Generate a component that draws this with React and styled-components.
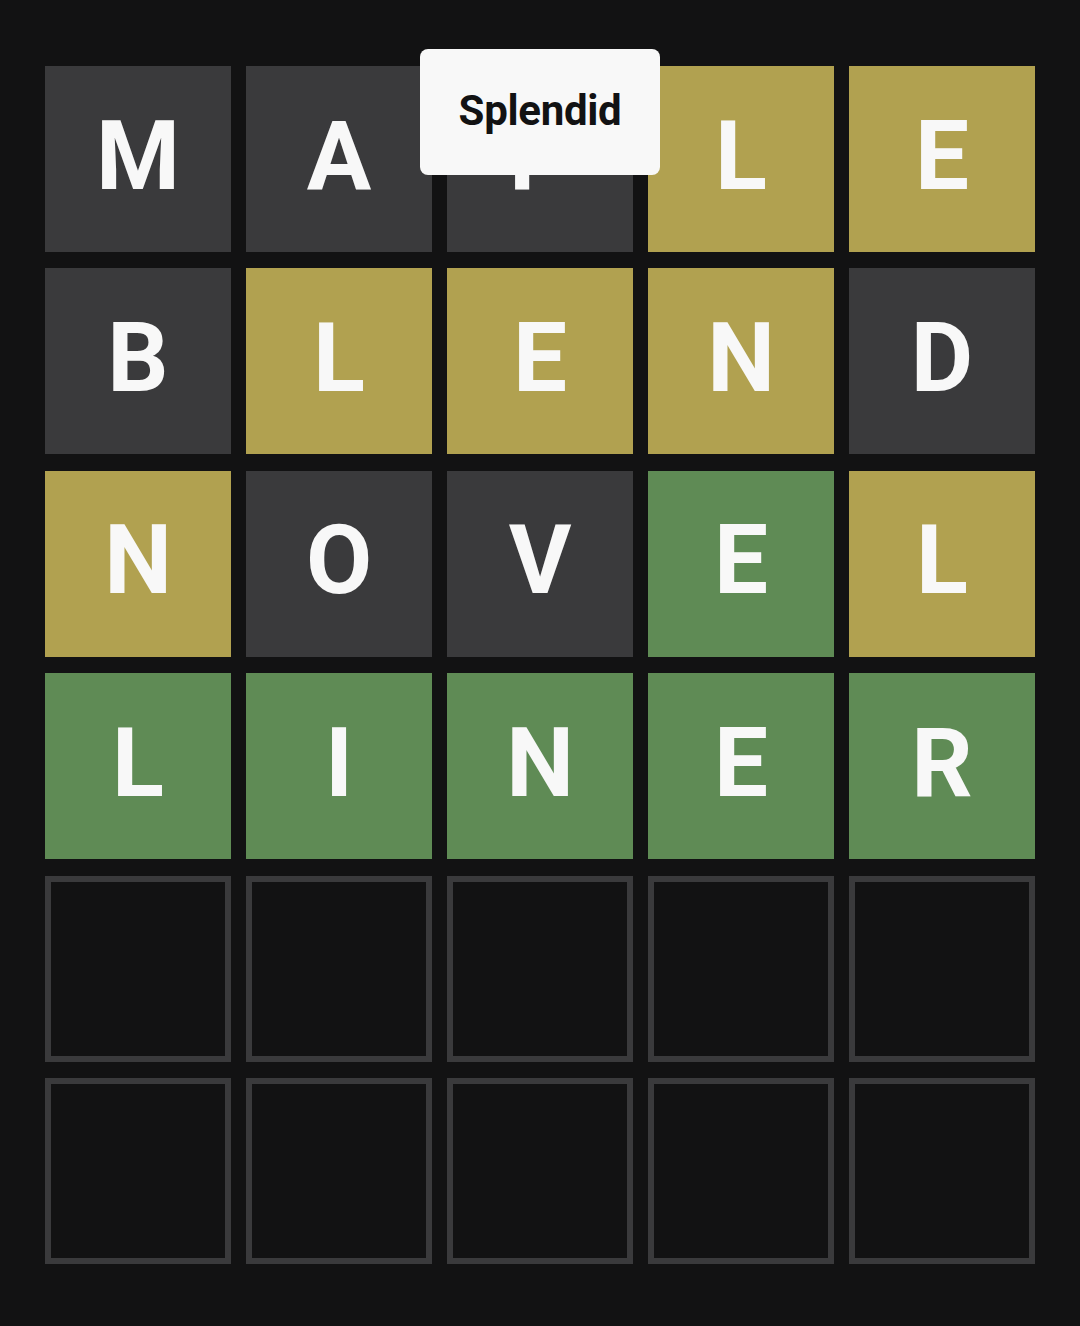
import React from "react";
import styled, { createGlobalStyle } from "styled-components";

const GlobalStyle = createGlobalStyle`
  html, body {
    margin: 0;
    padding: 0;
    background: #121213;
  }
  body {
    font-family: "Liberation Sans", Arial, sans-serif;
  }
`;

const Page = styled.div`
  position: relative;
  width: 1080px;
  height: 1326px;
  box-sizing: border-box;
  padding-top: 66px;
  display: flex;
  justify-content: center;
  background: #121213;
`;

const Board = styled.div`
  display: grid;
  grid-template-columns: repeat(5, 186px);
  grid-template-rows: repeat(6, 186px);
  column-gap: 15px;
  row-gap: 16.4px;
  height: fit-content;
`;

const COLORS = {
  absent: "#3a3a3c",
  present: "#b1a150",
  correct: "#5f8b55",
};

const Tile = styled.div`
  box-sizing: border-box;
  width: 186px;
  height: 186px;
  display: flex;
  align-items: center;
  justify-content: center;
  padding-bottom: 7px;
  background: ${(p) => (p.$state ? COLORS[p.$state] : "transparent")};
  border: ${(p) => (p.$state ? "none" : "6px solid #3a3a3c")};
  color: #f8f8f8;
  font-family: Roboto, "Liberation Sans", Arial, sans-serif;
  font-weight: 700;
  font-size: 96px;
  line-height: 1;
`;

const Toast = styled.div`
  position: absolute;
  top: 49px;
  left: 50%;
  transform: translateX(-50%);
  width: 240px;
  height: 126px;
  box-sizing: border-box;
  background: #f8f8f8;
  border-radius: 8px;
  display: flex;
  align-items: center;
  justify-content: center;
  padding-bottom: 4px;
  color: #121213;
  font-family: Roboto, "Liberation Sans", sans-serif;
  font-weight: 700;
  font-size: 42px;
  letter-spacing: -0.3px;
`;

const rows = [
  [["M", "absent"], ["A", "absent"], ["P", "absent"], ["L", "present"], ["E", "present"]],
  [["B", "absent"], ["L", "present"], ["E", "present"], ["N", "present"], ["D", "absent"]],
  [["N", "present"], ["O", "absent"], ["V", "absent"], ["E", "correct"], ["L", "present"]],
  [["L", "correct"], ["I", "correct"], ["N", "correct"], ["E", "correct"], ["R", "correct"]],
  [["", null], ["", null], ["", null], ["", null], ["", null]],
  [["", null], ["", null], ["", null], ["", null], ["", null]],
];

export default function App() {
  return (
    <>
      <GlobalStyle />
      <Page>
        <Board>
          {rows.flatMap((row, r) =>
            row.map(([letter, state], c) => (
              <Tile key={`${r}-${c}`} $state={state}>
                {letter}
              </Tile>
            ))
          )}
        </Board>
        <Toast>Splendid</Toast>
      </Page>
    </>
  );
}
